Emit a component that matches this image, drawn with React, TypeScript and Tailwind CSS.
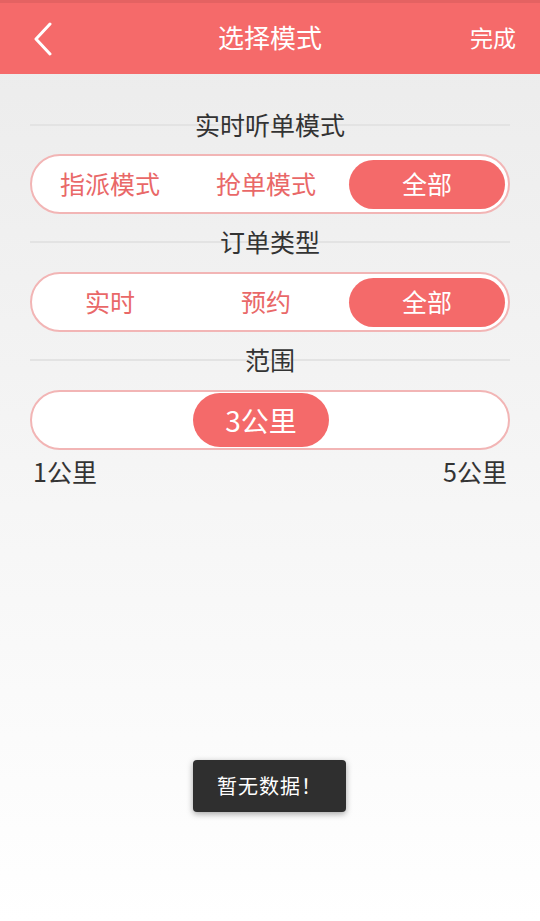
import React from "react";

const font = { fontFamily: '"Noto Sans CJK SC", "Noto Sans", sans-serif' };

function Title({ text }: { text: string }) {
  return (
    <div className="relative h-[36px] mx-[30px] flex items-center justify-center">
      <div className="absolute left-0 right-0 top-[16px] h-[2px] bg-[#e3e3e3]" />
      <span className="relative top-[-2px] text-[25px] leading-none text-[#333333]">{text}</span>
    </div>
  );
}

function Segmented({ items }: { items: string[] }) {
  return (
    <div className="mx-[30px] h-[60px] rounded-full border-2 border-[#f2b5b5] bg-white flex items-center">
      {items.map((t, i) => {
        const sel = i === items.length - 1;
        return (
          <div
            key={t}
            className={
              sel
                ? "ml-[5px] w-[156px] h-[49px] rounded-full bg-[#f46a6a] text-white flex items-center justify-center text-[25px]"
                : "w-[156px] h-[49px] flex items-center justify-center text-[25px] text-[#e96868]"
            }
          >
            {t}
          </div>
        );
      })}
    </div>
  );
}

export default function App() {
  return (
    <div
      style={font}
      className="w-[540px] h-[921px] relative overflow-hidden bg-gradient-to-b from-[#ebebeb] via-[#f5f5f5] to-white"
    >
      <div className="h-[74px] bg-[#f56a6a] border-t-[3px] border-[#e46262] flex items-center justify-between relative">
        <div className="w-[80px] h-full flex items-center pl-[33px] relative">
          <svg width="20" height="34" viewBox="0 0 20 34">
            <path d="M17 2 L3 17 L17 32" fill="none" stroke="white" strokeWidth="3" strokeLinecap="round" strokeLinejoin="round" />
          </svg>
        </div>
        <div className="absolute left-0 right-0 top-0 bottom-0 flex items-center justify-center pointer-events-none">
          <span className="relative top-[-2px] text-white text-[26px] leading-none">选择模式</span>
        </div>
        <span className="text-white text-[23px] leading-none pr-[24px] relative top-[-1px]">完成</span>
      </div>

      <div className="pt-[34px]">
        <Title text="实时听单模式" />
        <div className="h-[10px]" />
        <Segmented items={["指派模式", "抢单模式", "全部"]} />
        <div className="h-[11px]" />
        <Title text="订单类型" />
        <div className="h-[11px]" />
        <Segmented items={["实时", "预约", "全部"]} />
        <div className="h-[11px]" />
        <Title text="范围" />
        <div className="h-[11px]" />
        <div className="mx-[30px] h-[60px] rounded-full border-2 border-[#f2b5b5] bg-white flex items-center pl-[161px]">
          <div className="w-[136px] h-[54px] rounded-full bg-[#f46a6a] text-white text-[28px] flex items-center justify-center">
            3公里
          </div>
        </div>
        <div className="mx-[33px] mt-[4px] flex justify-between text-[25px] text-[#333333] leading-[34px]">
          <span>1公里</span>
          <span>5公里</span>
        </div>
      </div>

      <div className="absolute left-[193px] top-[760px] w-[153px] h-[52px] rounded-[4px] bg-[#2f2f2f] shadow-[0_2px_6px_rgba(0,0,0,0.35)] flex items-center justify-center text-white text-[20px] tracking-[1px]">
        暂无数据！
      </div>
    </div>
  );
}
